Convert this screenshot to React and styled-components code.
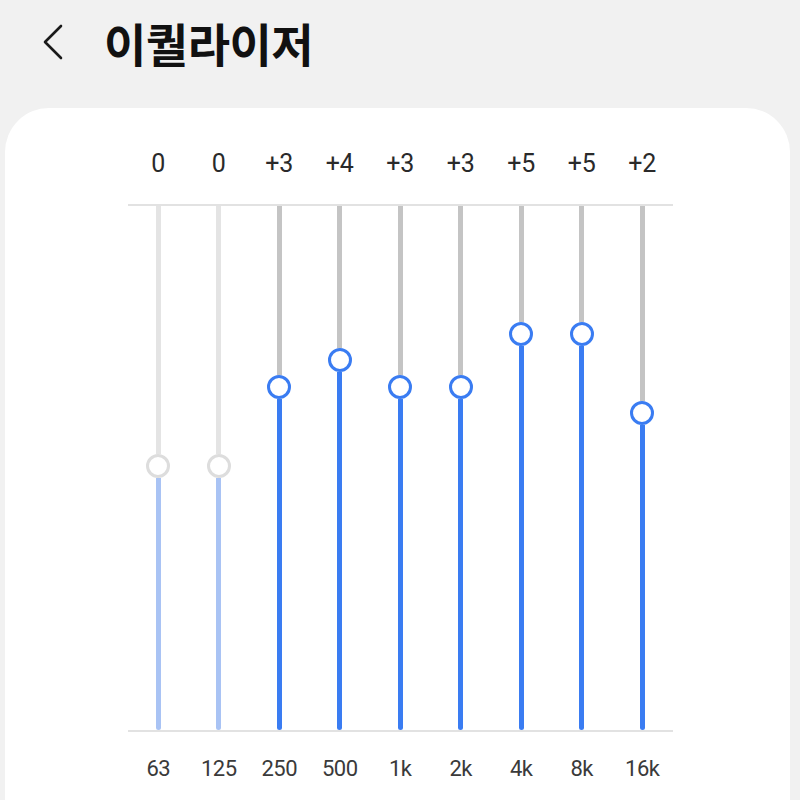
import styled, { createGlobalStyle } from "styled-components";

const GlobalStyle = createGlobalStyle`
  html, body {
    margin: 0;
    padding: 0;
    background: #f1f1f1;
  }
  body {
    font-family: Roboto, "Noto Sans CJK KR", sans-serif;
  }
`;

const Page = styled.div`
  min-height: 100vh;
  background: #f1f1f1;
  display: flex;
  flex-direction: column;
  overflow: hidden;
`;

const Header = styled.header`
  height: 108px;
  display: flex;
  align-items: center;
  padding-left: 42px;
  box-sizing: border-box;
  padding-bottom: 24px;
`;

const BackButton = styled.button`
  border: none;
  background: none;
  padding: 0;
  width: 22px;
  height: 38px;
  display: flex;
  align-items: center;
  cursor: pointer;
`;

const Title = styled.h1`
  margin: 0 0 0 40px;
  font-family: "Noto Sans CJK KR", sans-serif;
  font-size: 46px;
  font-weight: 700;
  color: #111;
  letter-spacing: -0.5px;
`;

const Card = styled.section`
  flex: 1;
  margin: 0 10px 0 5px;
  background: #fff;
  border-radius: 44px 44px 0 0;
  padding: 41px 0 0 123px;
  min-height: 700px;
  box-sizing: border-box;
`;

const Columns = styled.div`
  display: grid;
  grid-template-columns: repeat(9, 60.5px);
  width: 544.5px;
`;

const Value = styled.div`
  text-align: center;
  font-size: 25px;
  line-height: 30px;
  color: #2a2a2a;
  margin-bottom: 25px;
`;

const Chart = styled(Columns)`
  height: 524px;
  border-top: 2px solid #e2e2e2;
  border-bottom: 2px solid #e2e2e2;
`;

const Band = styled.div`
  display: flex;
  flex-direction: column;
  align-items: center;
`;

const Rail = styled.div`
  width: 5px;
  flex-shrink: 0;
  background: ${(p) => (p.$on ? "#c4c4c4" : "#e4e4e4")};
`;

const Fill = styled.div`
  width: 5px;
  flex: 1;
  border-radius: 0 0 3px 3px;
  background: ${(p) => (p.$on ? "#3a7cf2" : "#a9c3f4")};
`;

const Knob = styled.div`
  width: 24px;
  height: 24px;
  flex-shrink: 0;
  box-sizing: border-box;
  border-radius: 50%;
  background: #fff;
  border: 3px solid ${(p) => (p.$on ? "#3a7cf2" : "#dddddd")};
`;

const Freq = styled.div`
  text-align: center;
  font-size: 22px;
  line-height: 26px;
  color: #3a3a3a;
  margin-top: 24px;
  letter-spacing: -0.5px;
`;

const bands = [
  { hz: "63", gain: 0 },
  { hz: "125", gain: 0 },
  { hz: "250", gain: 3 },
  { hz: "500", gain: 4 },
  { hz: "1k", gain: 3 },
  { hz: "2k", gain: 3 },
  { hz: "4k", gain: 5 },
  { hz: "8k", gain: 5 },
  { hz: "16k", gain: 2 },
];

// one step of gain in px, 0 sits in the middle of the track
const STEP = 26.5;
const ZERO = 260;

const label = (g) => (g > 0 ? `+${g}` : `${g}`);

export default function App() {
  return (
    <Page>
      <GlobalStyle />
      <Header>
        <BackButton aria-label="뒤로">
          <svg width="22" height="38" viewBox="0 0 22 38">
            <polyline
              points="19,3 3,19 19,35"
              fill="none"
              stroke="#1a1a1a"
              strokeWidth="2.6"
              strokeLinecap="round"
              strokeLinejoin="round"
            />
          </svg>
        </BackButton>
        <Title>이퀄라이저</Title>
      </Header>
      <Card>
        <Columns>
          {bands.map((b) => (
            <Value key={b.hz}>{label(b.gain)}</Value>
          ))}
        </Columns>
        <Chart>
          {bands.map((b) => {
            const on = b.gain !== 0;
            return (
              <Band key={b.hz}>
                <Rail $on={on} style={{ height: ZERO - STEP * b.gain - 12 }} />
                <Knob $on={on} />
                <Fill $on={on} />
              </Band>
            );
          })}
        </Chart>
        <Columns>
          {bands.map((b) => (
            <Freq key={b.hz}>{b.hz}</Freq>
          ))}
        </Columns>
      </Card>
    </Page>
  );
}
